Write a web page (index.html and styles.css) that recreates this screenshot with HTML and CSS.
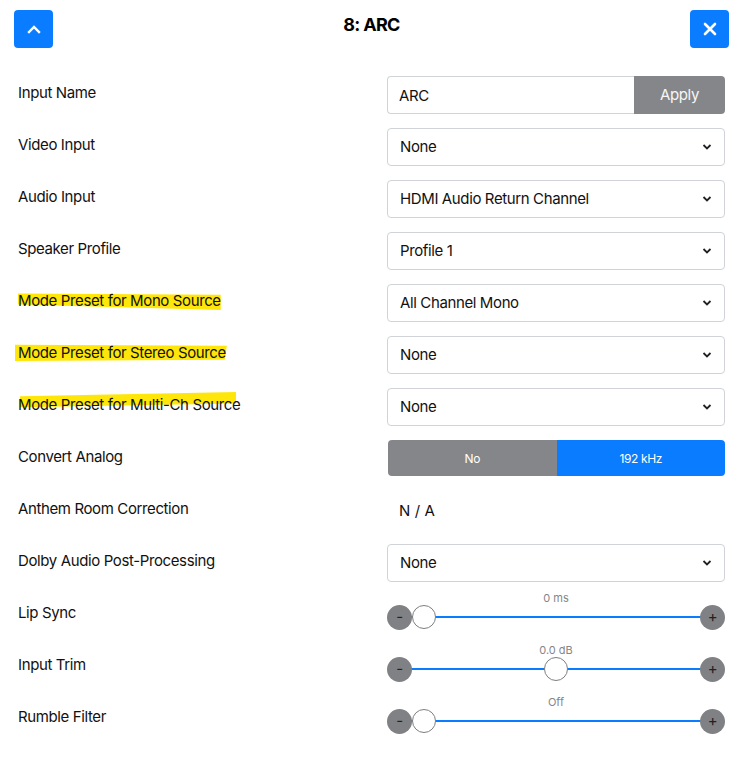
FILE: index.html
```html
<!DOCTYPE html>
<html lang="en">
<head>
<meta charset="utf-8">
<title>8: ARC</title>
<link rel="stylesheet" href="styles.css">
</head>
<body>
<div class="panel">
  <header class="head">
    <button class="icon-btn" aria-label="Up">
      <svg width="14" height="10" viewBox="0 0 14 10"><path d="M2 8 L7 3 L12 8" fill="none" stroke="#fff" stroke-width="2.4" stroke-linecap="square"/></svg>
    </button>
    <h1 class="title">8: ARC</h1>
    <button class="icon-btn" aria-label="Close">
      <svg width="14" height="14" viewBox="0 0 14 14"><path d="M2 2 L12 12 M12 2 L2 12" fill="none" stroke="#fff" stroke-width="2.6" stroke-linecap="round"/></svg>
    </button>
  </header>

  <div class="rows">
    <div class="row">
      <div class="label">Input Name</div>
      <div class="ctrl">
        <div class="input-group">
          <div class="text-input">ARC</div>
          <div class="apply">Apply</div>
        </div>
      </div>
    </div>

    <div class="row">
      <div class="label">Video Input</div>
      <div class="ctrl"><div class="select"><span>None</span><svg class="chev" width="10" height="6" viewBox="0 0 10 6"><path d="M1.5 1 L5 4.5 L8.5 1" fill="none" stroke="#222" stroke-width="1.8"/></svg></div></div>
    </div>

    <div class="row">
      <div class="label">Audio Input</div>
      <div class="ctrl"><div class="select"><span>HDMI Audio Return Channel</span><svg class="chev" width="10" height="6" viewBox="0 0 10 6"><path d="M1.5 1 L5 4.5 L8.5 1" fill="none" stroke="#222" stroke-width="1.8"/></svg></div></div>
    </div>

    <div class="row">
      <div class="label">Speaker Profile</div>
      <div class="ctrl"><div class="select"><span>Profile 1</span><svg class="chev" width="10" height="6" viewBox="0 0 10 6"><path d="M1.5 1 L5 4.5 L8.5 1" fill="none" stroke="#222" stroke-width="1.8"/></svg></div></div>
    </div>

    <div class="row">
      <div class="label"><span class="hl hl-a">Mode Preset for Mono Source</span></div>
      <div class="ctrl"><div class="select"><span>All Channel Mono</span><svg class="chev" width="10" height="6" viewBox="0 0 10 6"><path d="M1.5 1 L5 4.5 L8.5 1" fill="none" stroke="#222" stroke-width="1.8"/></svg></div></div>
    </div>

    <div class="row">
      <div class="label"><span class="hl hl-b">Mode Preset for Stereo Source</span></div>
      <div class="ctrl"><div class="select"><span>None</span><svg class="chev" width="10" height="6" viewBox="0 0 10 6"><path d="M1.5 1 L5 4.5 L8.5 1" fill="none" stroke="#222" stroke-width="1.8"/></svg></div></div>
    </div>

    <div class="row">
      <div class="label"><span class="hl hl-c">Mode Preset for Multi-Ch Source</span></div>
      <div class="ctrl"><div class="select"><span>None</span><svg class="chev" width="10" height="6" viewBox="0 0 10 6"><path d="M1.5 1 L5 4.5 L8.5 1" fill="none" stroke="#222" stroke-width="1.8"/></svg></div></div>
    </div>

    <div class="row">
      <div class="label">Convert Analog</div>
      <div class="ctrl">
        <div class="toggle">
          <div class="seg seg-off">No</div>
          <div class="seg seg-on">192 kHz</div>
        </div>
      </div>
    </div>

    <div class="row">
      <div class="label">Anthem Room Correction</div>
      <div class="ctrl"><div class="static">N / A</div></div>
    </div>

    <div class="row">
      <div class="label">Dolby Audio Post-Processing</div>
      <div class="ctrl"><div class="select"><span>None</span><svg class="chev" width="10" height="6" viewBox="0 0 10 6"><path d="M1.5 1 L5 4.5 L8.5 1" fill="none" stroke="#222" stroke-width="1.8"/></svg></div></div>
    </div>

    <div class="row">
      <div class="label">Lip Sync</div>
      <div class="ctrl">
        <div class="slider">
          <div class="value">0 ms</div>
          <div class="slide-line">
            <div class="round-btn">-</div>
            <div class="track"><div class="thumb thumb-min"></div></div>
            <div class="round-btn">+</div>
          </div>
        </div>
      </div>
    </div>

    <div class="row">
      <div class="label">Input Trim</div>
      <div class="ctrl">
        <div class="slider">
          <div class="value">0.0 dB</div>
          <div class="slide-line">
            <div class="round-btn">-</div>
            <div class="track"><div class="thumb thumb-mid"></div></div>
            <div class="round-btn">+</div>
          </div>
        </div>
      </div>
    </div>

    <div class="row">
      <div class="label">Rumble Filter</div>
      <div class="ctrl">
        <div class="slider">
          <div class="value">Off</div>
          <div class="slide-line">
            <div class="round-btn">-</div>
            <div class="track"><div class="thumb thumb-min"></div></div>
            <div class="round-btn">+</div>
          </div>
        </div>
      </div>
    </div>
  </div>
</div>
</body>
</html>
```

FILE: styles.css
```css
* { box-sizing: border-box; }
html, body { margin: 0; padding: 0; background: #fff; }
body {
  font-family: Inter, "Noto Sans", "Liberation Sans", sans-serif;
  color: #111;
  font-size: 15px;
  letter-spacing: -0.38px;
}
.panel { width: 748px; }

.head {
  display: flex;
  align-items: flex-start;
  justify-content: space-between;
  padding: 10px 19px 0 14px;
  height: 76px;
}
.icon-btn {
  width: 39px;
  height: 38px;
  border: none;
  border-radius: 4px;
  background: #0a7cff;
  display: flex;
  align-items: center;
  justify-content: center;
  padding: 0;
}
.title {
  margin: 4px 0 0 0;
  font-size: 18px;
  font-weight: 700;
  letter-spacing: -0.7px;
  line-height: 22px;
  color: #000;
}

.rows { padding-left: 18px; }
.row {
  display: grid;
  grid-template-columns: 369px 338px;
  height: 38px;
  margin-bottom: 14px;
}
.label {
  padding-top: 6px;
  line-height: 22px;
  font-size: 15px;
  color: #111;
  white-space: nowrap;
}

.hl { position: relative; z-index: 0; }
.hl::before {
  content: "";
  position: absolute;
  z-index: -1;
  background: #ffe60a;
}
.hl-a::before {
  left: 0; right: 0; top: 1px; height: 18px;
  clip-path: polygon(0 8%, 100% 15%, 100% 100%, 0 70%);
}
.hl-b::before {
  left: -3px; right: -1px; top: 1px; height: 17px;
  clip-path: polygon(0 5%, 100% 10%, 99% 92%, 0 100%);
}
.hl-c::before {
  left: 2px; right: 4px; top: -3px; height: 19px;
  clip-path: polygon(0 22%, 100% 0, 100% 60%, 0 80%);
}

.ctrl { height: 38px; }

.input-group {
  display: flex;
  height: 38px;
}
.text-input {
  flex: 1;
  border: 1px solid #d0d3d8;
  border-right: none;
  border-radius: 4px 0 0 4px;
  padding: 0 11px;
  line-height: 38px;
  font-size: 15px;
  color: #111;
}
.apply {
  width: 91px;
  background: #858689;
  color: #f6f6f6;
  border-radius: 0 4px 4px 0;
  text-align: center;
  line-height: 38px;
  font-size: 15px;
}

.select {
  height: 38px;
  border: 1px solid #d0d3d8;
  border-radius: 4px;
  display: flex;
  align-items: center;
  justify-content: space-between;
  padding: 0 12px 0 12px;
  font-size: 15px;
  color: #111;
}
.select span { margin-top: -1px; }

.toggle {
  display: flex;
  height: 36px;
  margin-left: 1px;
  border-radius: 4px;
  overflow: hidden;
}
.seg {
  flex: 1;
  display: flex;
  align-items: center;
  justify-content: center;
  font-size: 12px;
  color: #fff;
}
.seg-off { background: #858689; }
.seg-on { background: #0a7cff; }

.static {
  line-height: 38px;
  padding-left: 12px;
  font-size: 15px;
  letter-spacing: 0.1px;
}

.slider { height: 38px; }
.value {
  margin-top: -4px;
  height: 12px;
  line-height: 12px;
  font-size: 11px;
  letter-spacing: 0;
  color: #858689;
  text-align: center;
}
.slide-line {
  margin-top: 1px;
  display: flex;
  align-items: center;
  height: 24px;
}
.round-btn {
  width: 25px;
  height: 25px;
  border-radius: 50%;
  background: #808184;
  color: #222;
  font-size: 15px;
  line-height: 24px;
  text-align: center;
  flex: none;
  position: relative;
  z-index: 1;
}
.track {
  flex: 1;
  height: 24px;
  position: relative;
  margin: 0 -1px;
}
.track::before {
  content: "";
  position: absolute;
  left: 0; right: 0;
  top: 11px;
  height: 2px;
  background: #0a7cff;
}
.thumb {
  position: absolute;
  top: 0;
  width: 24px;
  height: 24px;
  border-radius: 50%;
  background: #fff;
  border: 1px solid #7d7e80;
}
.thumb-min { left: 1px; }
.thumb-mid { left: 50%; transform: translateX(-50%); }
```
